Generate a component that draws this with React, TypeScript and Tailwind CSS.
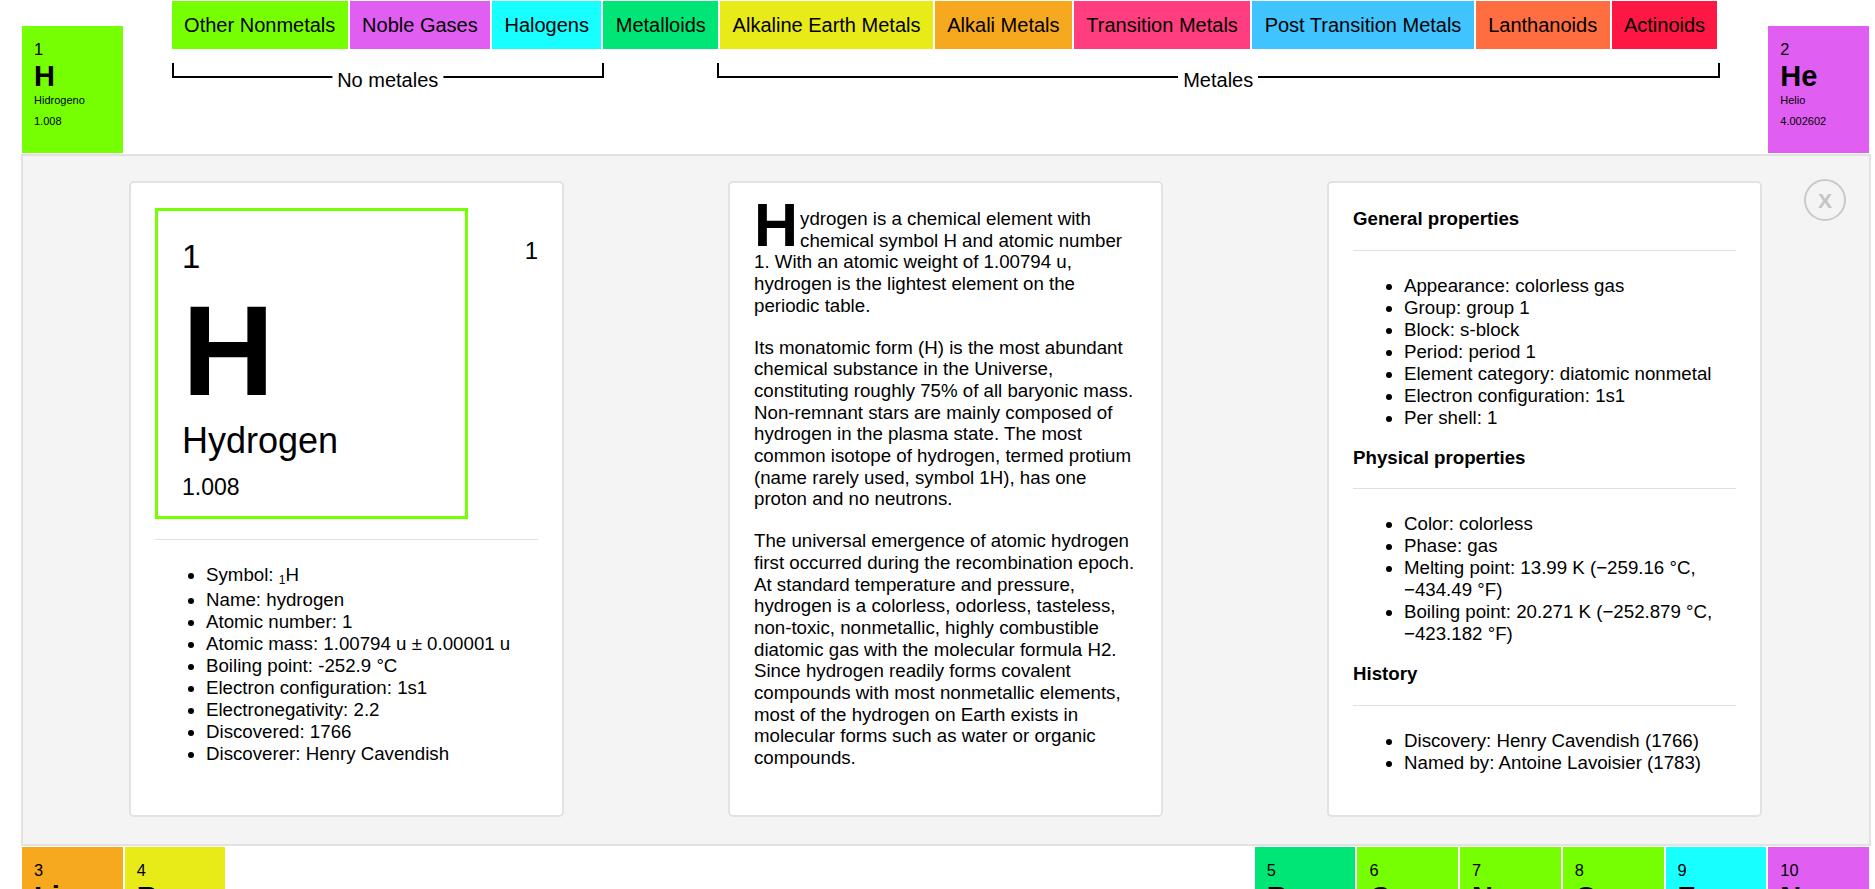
import React from 'react'

interface El {
  n: number
  s: string
  name: string
  w: string
  bg: string
  pos: string
}

const legend = [
  { label: 'Other Nonmetals', bg: 'bg-[#76ff03]' },
  { label: 'Noble Gases', bg: 'bg-[#e05ff2]' },
  { label: 'Halogens', bg: 'bg-[#18ffff]' },
  { label: 'Metalloids', bg: 'bg-[#00e676]' },
  { label: 'Alkaline Earth Metals', bg: 'bg-[#e9eb18]' },
  { label: 'Alkali Metals', bg: 'bg-[#f6a81f]' },
  { label: 'Transition Metals', bg: 'bg-[#ff3d7f]' },
  { label: 'Post Transition Metals', bg: 'bg-[#40c4ff]' },
  { label: 'Lanthanoids', bg: 'bg-[#ff6e40]' },
  { label: 'Actinoids', bg: 'bg-[#ff1744]' },
]

const topRow: El[] = [
  { n: 1, s: 'H', name: 'Hidrogeno', w: '1.008', bg: 'bg-[#76ff03]', pos: 'col-start-1 row-start-1' },
  { n: 2, s: 'He', name: 'Helio', w: '4.002602', bg: 'bg-[#e05ff2]', pos: 'col-start-18 row-start-1' },
]

const bottomRow: El[] = [
  { n: 3, s: 'Li', name: 'Litio', w: '6.94', bg: 'bg-[#f6a81f]', pos: 'col-start-1 row-start-3' },
  { n: 4, s: 'Be', name: 'Berilio', w: '9.0121831', bg: 'bg-[#e9eb18]', pos: 'col-start-2 row-start-3' },
  { n: 5, s: 'B', name: 'Boro', w: '10.81', bg: 'bg-[#00e676]', pos: 'col-start-13 row-start-3' },
  { n: 6, s: 'C', name: 'Carbono', w: '12.011', bg: 'bg-[#76ff03]', pos: 'col-start-14 row-start-3' },
  { n: 7, s: 'N', name: 'Nitrogeno', w: '14.007', bg: 'bg-[#76ff03]', pos: 'col-start-15 row-start-3' },
  { n: 8, s: 'O', name: 'Oxigeno', w: '15.999', bg: 'bg-[#76ff03]', pos: 'col-start-16 row-start-3' },
  { n: 9, s: 'F', name: 'Fluor', w: '18.998403163', bg: 'bg-[#18ffff]', pos: 'col-start-17 row-start-3' },
  { n: 10, s: 'Ne', name: 'Neon', w: '20.1797', bg: 'bg-[#e05ff2]', pos: 'col-start-18 row-start-3' },
]

function Tile({ el, top }: { el: El; top?: boolean }) {
  return (
    <div className={`${el.bg} ${el.pos} ${top ? 'mt-[26px]' : ''} h-[127px] self-start pl-[12px] pt-[15px]`}>
      <div className="text-[16.4px] leading-none">{el.n}</div>
      <div className="mt-[4.6px] text-[29px] font-bold leading-none">{el.s}</div>
      <div className="mt-[4.4px] text-[11px] leading-none">{el.name}</div>
      <div className="mt-[10px] text-[11px] leading-none">{el.w}</div>
    </div>
  )
}

function Bracket({ label, className }: { label: string; className: string }) {
  return (
    <div className={`relative h-[15px] border-x-2 border-b-2 border-black ${className}`}>
      <span className="absolute left-1/2 top-[6.7px] -translate-x-1/2 whitespace-nowrap bg-white px-[5px] text-[20px] leading-none">
        {label}
      </span>
    </div>
  )
}

function Divider() {
  return <div className="mt-[20px] h-px bg-[#e0e0e0]" />
}

export default function App() {
  return (
    <div className="min-h-screen bg-white font-['Liberation_Sans',Arial,sans-serif] text-[18.7px] leading-[22px] text-black">
      <div className="ml-[22px] grid w-[1847px] grid-cols-18 gap-x-[2px] gap-y-[1px]">
        {topRow.map((el) => (
          <Tile key={el.n} el={el} top />
        ))}

        {/* legend + groups */}
        <div className="col-span-16 col-start-2 row-start-1 pl-[47px] pt-[1px]">
          <div className="flex gap-[2px]">
            {legend.map((l) => (
              <div
                key={l.label}
                className={`${l.bg} flex h-[48px] items-center whitespace-nowrap px-[12.4px] text-[20px] leading-none`}
              >
                {l.label}
              </div>
            ))}
          </div>
          <div className="mt-[14px] flex">
            <Bracket label="No metales" className="w-[432px]" />
            <Bracket label="Metales" className="ml-[113px] w-[1003px]" />
          </div>
        </div>

        {/* detail panel */}
        <div className="relative col-span-18 row-start-2 -ml-px -mr-[2px] h-[692px] border-2 border-[#e2e2e2] bg-[#f4f4f4]">
          <button className="absolute right-[23px] top-[23px] flex h-[42px] w-[42px] items-center justify-center rounded-full border-2 border-[#cacaca] text-[21px] font-bold leading-none text-[#c4c4c4]">
            X
          </button>

          <div className="flex gap-[164px] pl-[106px] pt-[25px]">
            {/* card 1 */}
            <div className="h-[636px] w-[435px] rounded-[5px] border-2 border-[#e2e2e2] bg-white px-[24px] pt-[25px]">
              <div className="flex">
                <div className="h-[311px] w-[313px] border-[3px] border-[#76ff03] pl-[24px]">
                  <div className="mt-[29px] text-[33px] leading-none">1</div>
                  <div className="mt-[14px] text-[128px] font-bold leading-none">H</div>
                  <div className="mt-[8px] text-[36px] leading-none">Hydrogen</div>
                  <div className="mt-[17px] text-[23px] leading-none">1.008</div>
                </div>
                <div className="mt-[30.6px] flex-1 text-right text-[24px] leading-none">1</div>
              </div>
              <Divider />
              <ul className="mt-[24px] list-disc pl-[51px]">
                <li className="pb-[3px]">
                  Symbol: <sub className="text-[12px]">1</sub>H
                </li>
                <li>Name: hydrogen</li>
                <li>Atomic number: 1</li>
                <li>Atomic mass: 1.00794 u ± 0.00001 u</li>
                <li>Boiling point: -252.9 °C</li>
                <li>Electron configuration: 1s1</li>
                <li>Electronegativity: 2.2</li>
                <li>Discovered: 1766</li>
                <li>Discoverer: Henry Cavendish</li>
              </ul>
            </div>

            {/* card 2 */}
            <div className="h-[636px] w-[435px] rounded-[5px] border-2 border-[#e2e2e2] bg-white px-[24px] pt-[25px] leading-[21.7px]">
              <p>
                <span className="float-left mr-[2px] text-[61px] font-bold leading-[34px]">H</span>
                ydrogen is a chemical element with chemical symbol H and atomic number 1. With an atomic
                weight of 1.00794 u, hydrogen is the lightest element on the periodic table.
              </p>
              <p className="mt-[20px]">
                Its monatomic form (H) is the most abundant chemical substance in the Universe, constituting
                roughly 75% of all baryonic mass. Non-remnant stars are mainly composed of hydrogen in the
                plasma state. The most common isotope of hydrogen, termed protium (name rarely used, symbol
                1H), has one proton and no neutrons.
              </p>
              <p className="mt-[20px]">
                The universal emergence of atomic hydrogen first occurred during the recombination epoch. At
                standard temperature and pressure, hydrogen is a colorless, odorless, tasteless, non-toxic,
                nonmetallic, highly combustible diatomic gas with the molecular formula H2. Since hydrogen
                readily forms covalent compounds with most nonmetallic elements, most of the hydrogen on
                Earth exists in molecular forms such as water or organic compounds.
              </p>
            </div>

            {/* card 3 */}
            <div className="h-[636px] w-[435px] rounded-[5px] border-2 border-[#e2e2e2] bg-white px-[24px] pt-[25px]">
              <h3 className="font-bold leading-[21.7px]">General properties</h3>
              <Divider />
              <ul className="mt-[24px] list-disc pl-[51px]">
                <li>Appearance: colorless gas</li>
                <li>Group: group 1</li>
                <li>Block: s-block</li>
                <li>Period: period 1</li>
                <li>Element category: diatomic nonmetal</li>
                <li>Electron configuration: 1s1</li>
                <li>Per shell: 1</li>
              </ul>
              <h3 className="mt-[18px] font-bold leading-[21.7px]">Physical properties</h3>
              <Divider />
              <ul className="mt-[24px] list-disc pl-[51px]">
                <li>Color: colorless</li>
                <li>Phase: gas</li>
                <li>Melting point: 13.99 K (−259.16 °C, −434.49 °F)</li>
                <li>Boiling point: 20.271 K (−252.879 °C, −423.182 °F)</li>
              </ul>
              <h3 className="mt-[18px] font-bold leading-[21.7px]">History</h3>
              <Divider />
              <ul className="mt-[24px] list-disc pl-[51px]">
                <li>Discovery: Henry Cavendish (1766)</li>
                <li>Named by: Antoine Lavoisier (1783)</li>
              </ul>
            </div>
          </div>
        </div>

        {bottomRow.map((el) => (
          <Tile key={el.n} el={el} />
        ))}
      </div>
    </div>
  )
}
